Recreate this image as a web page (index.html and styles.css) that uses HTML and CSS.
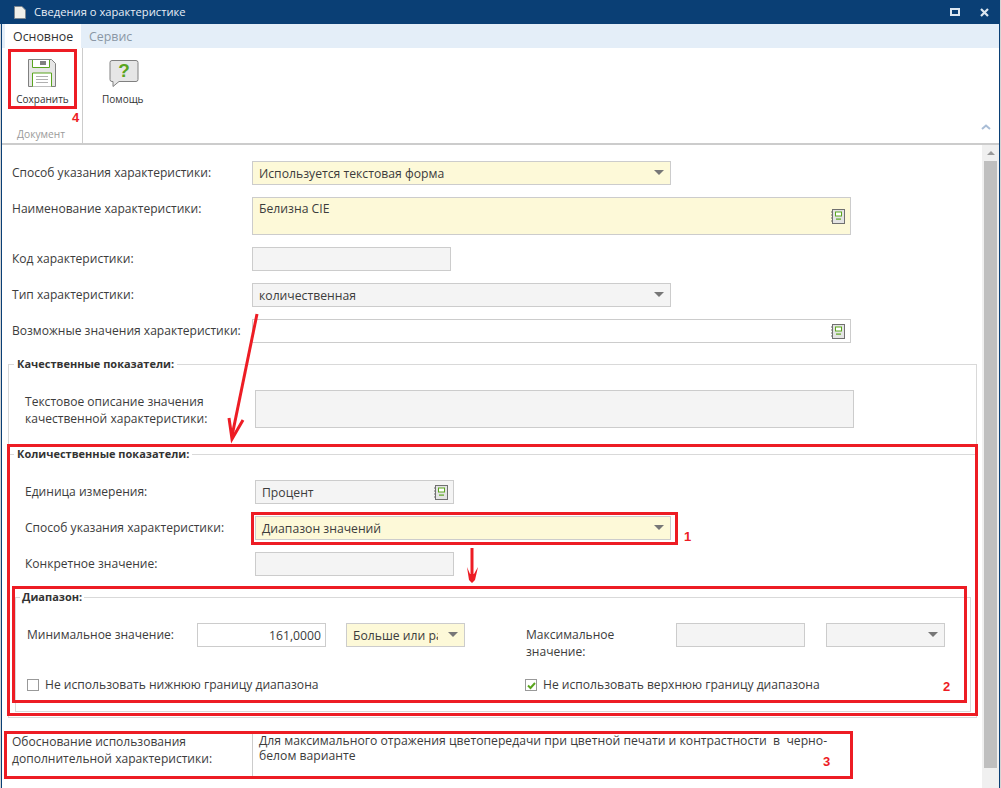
FILE: index.html
```html
<!DOCTYPE html>
<html lang="ru">
<head>
<meta charset="utf-8">
<title>Сведения о характеристике</title>
<link rel="stylesheet" href="styles.css">
</head>
<body>
<svg width="0" height="0" class="defs">
  <symbol id="lookup" viewBox="0 0 14 15">
    <rect x="1.5" y="0.5" width="12" height="14" fill="#e4e4e4" stroke="#707070"/>
    <rect x="4.5" y="3" width="6" height="4" fill="#fff" stroke="#5aa51e"/>
    <rect x="5" y="9.5" width="5" height="1.2" fill="#5aa51e"/>
    <path d="M0 3h1.5M0 6h1.5M0 9h1.5M0 12h1.5" stroke="#707070"/>
  </symbol>
  <symbol id="caret" viewBox="0 0 10 5"><path d="M0 0h10L5 5z" fill="#777"/></symbol>
</svg>
<div class="window">
  <header class="titlebar">
    <svg class="doc-icon" width="12" height="13" viewBox="0 0 12 13"><path d="M.5.5h7.5l3.5 3.5v8.500H.5z" fill="#f0f0ea" stroke="#7d8791"/></svg>
    <span class="title">Сведения о характеристике</span>
    <svg class="win-btn max" width="10" height="8" viewBox="0 0 10 8"><rect x="1" y="1" width="8" height="6" fill="none" stroke="#dce6f0" stroke-width="2"/></svg>
    <svg class="win-btn" width="9" height="9" viewBox="0 0 9 9"><path d="M1 1l7 7M8 1l-7 7" stroke="#dce6f0" stroke-width="2.2"/></svg>
  </header>
  <nav class="tabs">
    <span class="tab active">Основное</span>
    <span class="tab">Сервис</span>
  </nav>
  <section class="ribbon">
    <div class="rib-group">
      <div class="rib-btn save">
        <svg width="28" height="28" viewBox="0 0 28 28">
          <path d="M.5.5h23l4 4v23H.5z" fill="#e6e6e6" stroke="#808080"/>
          <path d="M4.500 1v7.500h17V1" fill="#fff" stroke="#5aa51e"/>
          <rect x="12" y="2" width="6" height="4" fill="#808080"/>
          <path d="M4.500 27.500v-13.500h19v13.500" fill="#fff" stroke="#5aa51e"/>
          <path d="M8 17.500h12M8 20.500h12M8 23.500h12" stroke="#b0b0b0"/>
        </svg>
        <span>Сохранить</span>
      </div>
      <span class="rib-caption">Документ</span>
    </div>
    <div class="rib-btn help">
      <svg width="30" height="28" viewBox="0 0 30 28">
        <path d="M3 .5h24q2 0 2 2v17q0 2-2 2H10l-6 5v-5H3q-2 0-2-2v-17q0-2 2-2z" fill="#e6e6e6" stroke="#808080"/>
        <text x="15" y="17" class="q">?</text>
      </svg>
      <span>Помощь</span>
    </div>
    <svg class="collapse" width="10" height="6" viewBox="0 0 10 6"><path d="M1 5l4-3.5L9 5" fill="none" stroke="#a9bdd6" stroke-width="2"/></svg>
  </section>
  <div class="content">
    <main class="form">
      <div class="row r1"><label>Способ указания характеристики:</label><div class="field sel yellow w419">Используется текстовая форма<svg class="caret"><use href="#caret"/></svg></div></div>
      <div class="row r2"><label>Наименование характеристики:</label><div class="field yellow w599 tall">Белизна CIE<svg class="look"><use href="#lookup"/></svg></div></div>
      <div class="row"><label>Код характеристики:</label><div class="field gray w199"></div></div>
      <div class="row"><label>Тип характеристики:</label><div class="field sel gray w419">количественная<svg class="caret"><use href="#caret"/></svg></div></div>
      <div class="row"><label>Возможные значения характеристики:</label><div class="field white w599"><svg class="look"><use href="#lookup"/></svg></div></div>

      <fieldset class="group g1">
        <legend>Качественные показатели:</legend>
        <div class="row in r-text"><label>Текстовое описание значения качественной характеристики:</label><div class="field gray w599 h38"></div></div>
      </fieldset>

      <fieldset class="group g2">
        <legend>Количественные показатели:</legend>
        <div class="row in"><label>Единица измерения:</label><div class="field gray w199">Процент<svg class="look"><use href="#lookup"/></svg></div></div>
        <div class="row in"><label>Способ указания характеристики:</label><div class="field sel yellow w416">Диапазон значений<svg class="caret"><use href="#caret"/></svg></div></div>
        <div class="row in"><label>Конкретное значение:</label><div class="field gray w199"></div></div>
        <fieldset class="group g3">
          <legend>Диапазон:</legend>
          <div class="range">
            <label class="min-l">Минимальное значение:</label>
            <div class="field white num w129">161,0000</div>
            <div class="field sel yellow w119 clip"><span>Больше или равно</span><svg class="caret"><use href="#caret"/></svg></div>
            <label class="max-l">Максимальное значение:</label>
            <div class="field gray w129"></div>
            <div class="field sel gray w119"><svg class="caret"><use href="#caret"/></svg></div>
          </div>
          <div class="checks">
            <div class="check"><span class="box"></span>Не использовать нижнюю границу диапазона</div>
            <div class="check"><span class="box"><svg width="11" height="11" viewBox="0 0 11 11"><path d="M2 5.500l2.500 2.500 4.500-5" fill="none" stroke="#5aa51e" stroke-width="2"/></svg></span>Не использовать верхнюю границу диапазона</div>
          </div>
        </fieldset>
      </fieldset>

      <div class="row just">
        <label>Обоснование использования дополнительной характеристики:</label>
        <div class="just-text">Для максимального отражения цветопередачи при цветной печати и контрастности  в  черно-белом варианте</div>
      </div>
    </main>
    <aside class="scrollbar">
      <div class="sb-up"><svg width="8" height="4" viewBox="0 0 8 4"><path d="M0 4h8L4 0z" fill="#999"/></svg></div>
      <div class="sb-thumb"></div>
    </aside>
  </div>

  <div class="mark m-save"></div>
  <div class="mark m-g2"></div>
  <div class="mark m-sel"></div>
  <div class="mark m-range"></div>
  <div class="mark m-just"></div>
  <span class="num-mark n4">4</span>
  <span class="num-mark n1">1</span>
  <span class="num-mark n2">2</span>
  <span class="num-mark n3">3</span>
  <svg class="arrows" width="1001" height="788" viewBox="0 0 1001 788">
    <path d="M257 314L232 436" fill="none" stroke="#ed1c24" stroke-width="3"/>
    <path d="M229 418L232 439L243 420" fill="none" stroke="#ed1c24" stroke-width="3"/>
    <path d="M472 548V578" fill="none" stroke="#ed1c24" stroke-width="3"/>
    <path d="M467 567L470 574H474L478 567L475 580L472 583L469 580z" fill="#ed1c24"/>
  </svg>
</div>
</body>
</html>
```
FILE: styles.css
```css
* { box-sizing: border-box; }
html, body { margin: 0; padding: 0; background: #d4d4d4; }
body {
  width: 1001px; height: 788px; overflow: hidden;
  font: 12.05px/16px "Open Sans", "Noto Sans", sans-serif;
  color: #3c3c3c;
}
.defs { position: absolute; }
.window {
  position: relative; width: 999px; height: 788px; margin-left: 1px;
  border-left: 1px solid #0a3f75; border-right: 1px solid #0a3f75;
  background: #fff;
}
.titlebar {
  height: 24px; margin: 0 -1px 0 -2px; padding: 0 0 0 14px;
  background: #0a3f75; color: #e8eef5;
  display: flex; align-items: center;
}
.doc-icon { margin-right: 8px; }
.title { flex: 1; font-size: 11.2px; }
.win-btn { margin-right: 11px; }
.win-btn.max { margin-right: 20px; }
.tabs { height: 24px; background: #e4eef8; display: flex; padding-left: 3px; }
.tab { padding: 3px 8px 0; width: 76px; font-size: 12.4px; color: #8a97a5; line-height: 20px; }
.tab.active { background: #fff; color: #333; }
.ribbon {
  height: 97px; border-bottom: 2px solid #ccc;
  display: flex; position: relative;
}
.rib-group {
  width: 81px; border-right: 1px solid #ccc;
  display: flex; flex-direction: column; align-items: center;
  text-align: center;
}
.rib-btn { display: flex; flex-direction: column; align-items: center; font-size: 10px; color: #333; line-height: 14px; }
.rib-btn svg { display: block; }
.rib-btn.save { padding: 11px 0 0 0; gap: 5px; height: 72px; }
.rib-btn.save span { margin-left: 1px; }
.rib-btn.help { padding: 12px 0 0 0; gap: 4px; margin-left: 19px; }
.rib-btn.help svg { margin-left: 2px; }
.rib-caption { color: #9a9a9a; margin-top: 6px; margin-right: 2px; font-size: 10.2px; }
.q { font: bold 19px "Liberation Sans", sans-serif; fill: #5aa51e; text-anchor: middle; }
.collapse { position: absolute; right: 8px; top: 76px; }
.content { display: flex; height: 643px; }
.form { width: 980px; padding: 16px 0 0 10px; overflow: hidden; flex: none; }
.scrollbar { width: 17px; background: #f0f0f0; flex: none; display: flex; flex-direction: column; align-items: center; }
.sb-up { height: 16px; display: flex; align-items: center; justify-content: center; }
.sb-thumb { width: 13px; height: 607px; background: #bfbfbf; }
.row { display: flex; margin-bottom: 12px; }
.row > label { width: 240px; flex: none; padding-top: 4px; }
.field {
  height: 24px; border: 1px solid #ccc; padding: 4px 6px 0; position: relative;
  flex: none; line-height: 16px; color: #3c3c3c; font-size: 12.2px;
}
.yellow { background: #fdf9d8; }
.gray { background: #f4f4f4; }
.white { background: #fff; }
.w199 { width: 199px; } .w419 { width: 419px; } .w416 { width: 416px; } .w599 { width: 599px; }
.w129 { width: 129px; } .w119 { width: 119px; }
.tall { height: 38px; padding-top: 3px; }
.h38 { height: 38px; }
.caret { position: absolute; right: 6px; top: 8px; width: 10px; height: 5px; }
.look { position: absolute; right: 5px; top: 4px; width: 14px; height: 15px; }
.r2 .look { top: 11px; }
.group { margin: 0; padding: 0; border: 1px solid #d9d9d9; min-width: 0; }
.group legend { font-weight: 700; font-size: 11px; line-height: 16px; color: #333; padding: 1px 3px; margin-left: 5px; }
.g1 { margin: 0 0 0 -4px; width: 969px; height: 90px; }
.g1 .row { margin: 17px 0 0 16px; }
.g1 .row > label { width: 230px; padding-top: 3px; line-height: 17px; }
.g2 { margin: 0 0 0 -4px; width: 969px; height: 273px; }
.g2 > .row { margin: 0 0 12px 16px; }
.g2 > .row:first-of-type { margin-top: 17px; }
.g2 > .row > label { width: 230px; }
.g3 { margin: 0 0 0 6px; width: 956px; height: 124px; }
.g3 legend { margin-left: 4px; padding: 1px 2px; }
.range { display: flex; margin: 17px 0 0 11px; align-items: flex-start; }
.min-l { width: 170px; flex: none; padding-top: 4px; font-size: 12px; }
.num { text-align: right; padding-right: 4px; }
.clip { margin-left: 20px; }
.clip span { display: block; width: 85px; overflow: hidden; white-space: nowrap; }
.max-l { width: 150px; flex: none; margin-left: 61px; padding: 3px 30px 0 0; line-height: 17px; }
.max-l + .field + .field { margin-left: 21px; }
.checks { display: flex; margin: 17px 0 0 11px; }
.check { display: flex; align-items: center; gap: 6px; width: 498px; flex: none; font-size: 12.1px; }
.box { width: 12px; height: 12px; border: 1px solid #999; background: #fff; display: block; flex: none; }
.box svg { display: block; margin: -0.5px; }
.just { margin: 15px 0 0 0; height: 43px; }
.just > label { width: 240px; line-height: 17px; padding: 0 8px 0 0; }
.just-text { border-left: 1px solid #ccc; flex: none; width: 590px; padding: 0 0 0 6px; line-height: 15px; white-space: pre-wrap; font-size: 12.2px; }

.mark { position: absolute; border: 3px solid #ed1c24; pointer-events: none; }
.m-save { left: 6px; top: 49px; width: 69px; height: 60px; }
.m-g2 { left: 5px; top: 444px; width: 971px; height: 272px; }
.m-sel { left: 249px; top: 512px; width: 427px; height: 33px; }
.m-range { left: 10px; top: 586px; width: 955px; height: 117px; }
.m-just { left: 2px; top: 731px; width: 849px; height: 48px; }
.num-mark { position: absolute; color: #ed1c24; font: 700 13px/14px "Liberation Sans", sans-serif; }
.n4 { left: 70px; top: 111px; }
.n1 { left: 682px; top: 530px; }
.n2 { left: 941px; top: 680px; }
.n3 { left: 821px; top: 755px; }
.arrows { position: absolute; left: -2px; top: 0; pointer-events: none; }
```
